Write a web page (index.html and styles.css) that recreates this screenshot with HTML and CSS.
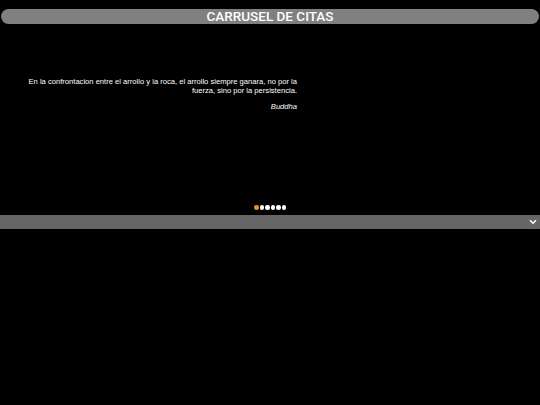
FILE: index.html
```html
<!DOCTYPE html>
<html>
<head>
<meta charset="utf-8">
<link rel="stylesheet" href="styles.css">
</head>
<body>
<div class="page">
  <header class="title-bar"><h1 class="title">CARRUSEL DE CITAS</h1></header>
  <section class="carousel">
    <div class="slide">
      <blockquote class="quote">
        <p class="quote-text">En la confrontacion entre el arrollo y la roca, el arrollo siempre ganara, no por la fuerza, sino por la persistencia.</p>
        <p class="quote-author">Buddha</p>
      </blockquote>
    </div>
    <div class="dots">
      <span class="dot active"></span>
      <span class="dot"></span>
      <span class="dot"></span>
      <span class="dot"></span>
      <span class="dot"></span>
      <span class="dot"></span>
    </div>
  </section>
  <div class="toggle-bar">
    <svg class="chevron" width="8" height="6" viewBox="0 0 8 6"><path d="M1 1.2 L4 4.2 L7 1.2" fill="none" stroke="#fff" stroke-width="1.6"/></svg>
  </div>
</div>
</body>
</html>
```
FILE: styles.css
```css
html, body {
  margin: 0;
  padding: 0;
  background: #000;
}
.page {
  width: 540px;
  height: 405px;
  padding-top: 9px;
  box-sizing: border-box;
}
.title-bar {
  margin: 0 1px;
  height: 15px;
  background: #808080;
  border-radius: 8px;
  display: flex;
  align-items: center;
  justify-content: center;
}
.title {
  margin: 0;
  font-family: Roboto, "Liberation Sans", sans-serif;
  font-size: 13.5px;
  font-weight: 500;
  color: #fff;
  line-height: 15px;
}
.carousel {
  height: 191px;
  display: flex;
  flex-direction: column;
}
.slide {
  flex: 1;
  padding: 53px 0 0 25px;
}
.quote {
  margin: 0;
  width: 272px;
  text-align: right;
  font-family: "Liberation Sans", Arial, sans-serif;
  font-size: 7.6px;
  line-height: 9px;
  color: #fff;
}
.quote-text {
  margin: 0;
}
.quote-author {
  margin: 7px 0 0;
  font-style: italic;
}
.dots {
  display: flex;
  justify-content: center;
  gap: 1px;
  height: 10px;
}
.dot {
  width: 4.5px;
  height: 4.5px;
  border-radius: 50%;
  background: #fff;
}
.dot.active {
  background: #e0961e;
}
.toggle-bar {
  height: 14px;
  background: #666;
  display: flex;
  align-items: center;
  justify-content: flex-end;
  padding-right: 3px;
}
.chevron {
  display: block;
}
```
